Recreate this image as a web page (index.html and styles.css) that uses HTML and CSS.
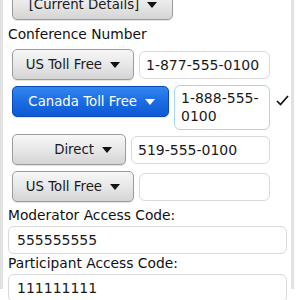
FILE: index.html
```html
<!DOCTYPE html>
<html>
<head>
<meta charset="utf-8">
<link rel="stylesheet" href="styles.css">
</head>
<body>
<div class="panel">
  <div class="content">
    <div class="top-row">
      <button class="btn btn-top">[Current Details]<span class="arrow"></span></button>
    </div>
    <div class="label label-first">Conference Number</div>

    <div class="row">
      <button class="btn w1">US Toll Free<span class="arrow"></span></button>
      <div class="field">1-877-555-0100</div>
      <div class="check-col"></div>
    </div>

    <div class="row">
      <button class="btn btn-blue w2">Canada Toll Free<span class="arrow"></span></button>
      <div class="field field-focus">1-888-555-<br>0100</div>
      <div class="check-col">
        <svg class="check" width="13" height="11" viewBox="0 0 13 11"><path d="M1 6 L4.5 9.5 L12 1" fill="none" stroke="#111" stroke-width="1.7"/></svg>
      </div>
    </div>

    <div class="row row-tight">
      <button class="btn w3">Direct<span class="arrow"></span></button>
      <div class="field">519-555-0100</div>
      <div class="check-col"></div>
    </div>

    <div class="row">
      <button class="btn w1">US Toll Free<span class="arrow"></span></button>
      <div class="field"></div>
      <div class="check-col"></div>
    </div>

    <div class="label label-mod">Moderator Access Code:</div>
    <div class="field field-wide">555555555</div>
    <div class="label label-part">Participant Access Code:</div>
    <div class="field field-wide">111111111</div>
  </div>
</div>
</body>
</html>
```

FILE: styles.css
```css
html, body {
  margin: 0;
  padding: 0;
  background: #ffffff;
  overflow: hidden;
}

body {
  width: 296px;
  height: 300px;
  font-family: "DejaVu Sans", "Liberation Sans", sans-serif;
  font-size: 14px;
  color: #1a1a1a;
}

.panel {
  width: 288px;
  height: 300px;
  border-left: 3px solid #e2e2e2;
  border-right: 3px solid #e2e2e2;
  background: #ffffff;
}

.content {
  padding: 0 4px 0 5px;
}

.top-row {
  padding-left: 4px;
  margin-top: -11px;
}

.btn {
  box-sizing: border-box;
  height: 31px;
  display: flex;
  align-items: center;
  justify-content: flex-end;
  padding: 0 13px 0 14px;
  font-family: "DejaVu Sans", "Liberation Sans", sans-serif;
  font-size: 13.3px;
  color: #1a1a1a;
  background: linear-gradient(#f7f7f7, #e6e6e6 55%, #d4d4d4);
  border: 1px solid #9c9c9c;
  border-radius: 5px;
  box-shadow: 0 1px 1px rgba(0, 0, 0, 0.12);
  white-space: nowrap;
  margin: 0;
}

.btn-top {
  width: 161px;
  justify-content: center;
}

.w1 { width: 122px; }
.w2 { width: 157px; }
.w3 { width: 114px; }

.btn-blue {
  color: #ffffff;
  background: linear-gradient(#3186ee, #1a6ae2 55%, #0d5ad4);
  border-color: #0a4bb5;
}

.arrow {
  display: inline-block;
  width: 0;
  height: 0;
  margin-left: 8px;
  border-left: 5px solid transparent;
  border-right: 5px solid transparent;
  border-top: 6px solid #111111;
}

.btn-blue .arrow {
  border-top-color: #ffffff;
}

.label {
  font-size: 13.8px;
  line-height: 20px;
  color: #111111;
}

.label-first {
  margin-top: 2px;
  line-height: 25px;
}

.row {
  display: grid;
  grid-template-columns: auto 1fr 12px;
  column-gap: 5px;
  align-items: start;
  padding-left: 4px;
  margin-top: 6px;
}

.label-first + .row {
  margin-top: 2px;
}

.row-tight {
  margin-top: 4px;
}

.field {
  box-sizing: border-box;
  height: 28px;
  margin-top: 2px;
  padding: 0 6px;
  line-height: 26px;
  background: #ffffff;
  border: 1px solid #dadada;
  border-radius: 6px;
  white-space: nowrap;
}

.field-focus {
  height: 45px;
  margin-top: -1px;
  padding-top: 3px;
  line-height: 18px;
  border-color: #a9d6f0;
}

.check-col {
  height: 28px;
}

.check {
  display: block;
  margin: 9px 0 0 1px;
}

.field-wide {
  margin-top: 1px;
  padding-left: 8px;
}

.label-mod {
  margin-top: 3px;
}

.label-part {
  margin-top: -1px;
}
```
